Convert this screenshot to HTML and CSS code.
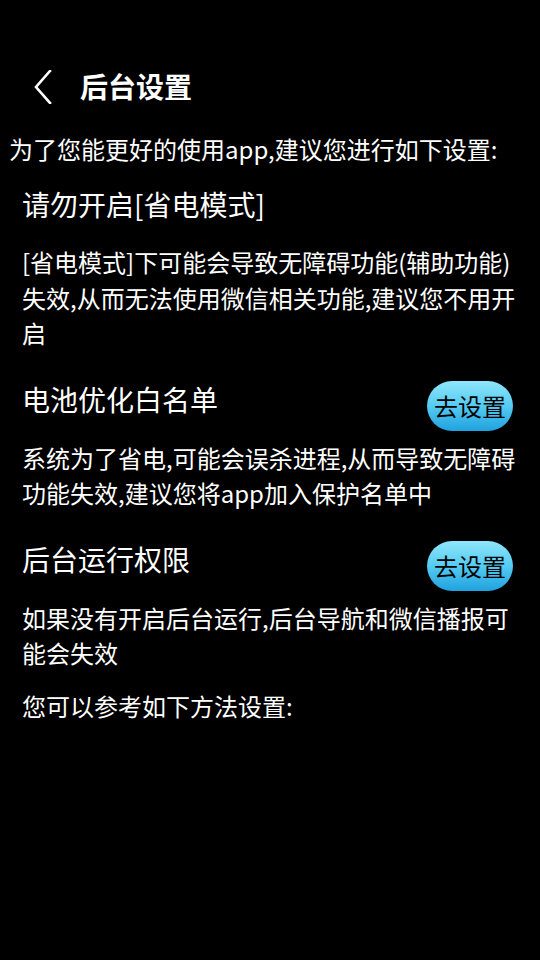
FILE: index.html
```html
<!DOCTYPE html>
<html lang="zh-CN">
<head>
<meta charset="utf-8">
<title>后台设置</title>
<link rel="stylesheet" href="styles.css">
</head>
<body>
<header class="topbar">
  <svg class="back" width="20" height="34" viewBox="0 0 20 34"><path d="M17 1 L3 17 L17 33" fill="none" stroke="#fff" stroke-width="2.6" stroke-linecap="square"/></svg>
  <h1 class="title">后台设置</h1>
</header>
<p class="intro">为了您能更好的使用app,建议您进行如下设置:</p>

<h2 class="heading first">请勿开启[省电模式]</h2>
<p class="desc gap-s">[省电模式]下可能会导致无障碍功能(辅助功能)失效,从而无法使用微信相关功能,建议您不用开启</p>

<div class="row">
  <h2 class="heading">电池优化白名单</h2>
  <button class="go">去设置</button>
</div>
<p class="desc">系统为了省电,可能会误杀进程,从而导致无障碍功能失效,建议您将app加入保护名单中</p>

<div class="row">
  <h2 class="heading">后台运行权限</h2>
  <button class="go">去设置</button>
</div>
<p class="desc">如果没有开启后台运行,后台导航和微信播报可能会失效</p>

<p class="desc last">您可以参考如下方法设置:</p>
</body>
</html>
```
FILE: styles.css
```css
html, body {
  margin: 0;
  padding: 0;
  background: #000;
  color: #fff;
  font-family: "Noto Sans CJK SC", "Noto Sans", sans-serif;
  width: 540px;
  height: 960px;
  overflow: hidden;
}
.topbar {
  margin-top: 58px;
  height: 56px;
  display: flex;
  align-items: center;
  padding-left: 33px;
}
.back {
  display: block;
  margin-right: 27px;
  position: relative;
  top: 1px;
}
.title {
  margin: 0;
  font-size: 28px;
  font-weight: bold;
  line-height: 40px;
}
.intro {
  margin: 17px 0 0;
  padding-left: 9px;
  font-size: 24px;
  line-height: 36px;
}
.heading {
  margin: 0;
  font-size: 28px;
  font-weight: normal;
  line-height: 36px;
}
.heading.first {
  margin-top: 17px;
  padding-left: 22px;
  line-height: 40px;
}
.desc {
  margin: 9px 0 0;
  padding: 0 18px 0 22px;
  font-size: 24px;
  line-height: 35.5px;
}
.desc.gap-s {
  margin-top: 20px;
}
.desc.last {
  margin-top: 17px;
}
.row {
  margin-top: 30px;
  display: flex;
  justify-content: space-between;
  align-items: flex-start;
  padding: 0 27px 0 22px;
}
.go {
  width: 86px;
  height: 50px;
  border: none;
  border-radius: 25px;
  padding: 0;
  background: linear-gradient(to bottom, #8fe6fc 0%, #55cbf2 50%, #1fa2df 100%);
  color: #000;
  font-family: "Noto Sans CJK SC", sans-serif;
  font-size: 24px;
  line-height: 50px;
}
```
